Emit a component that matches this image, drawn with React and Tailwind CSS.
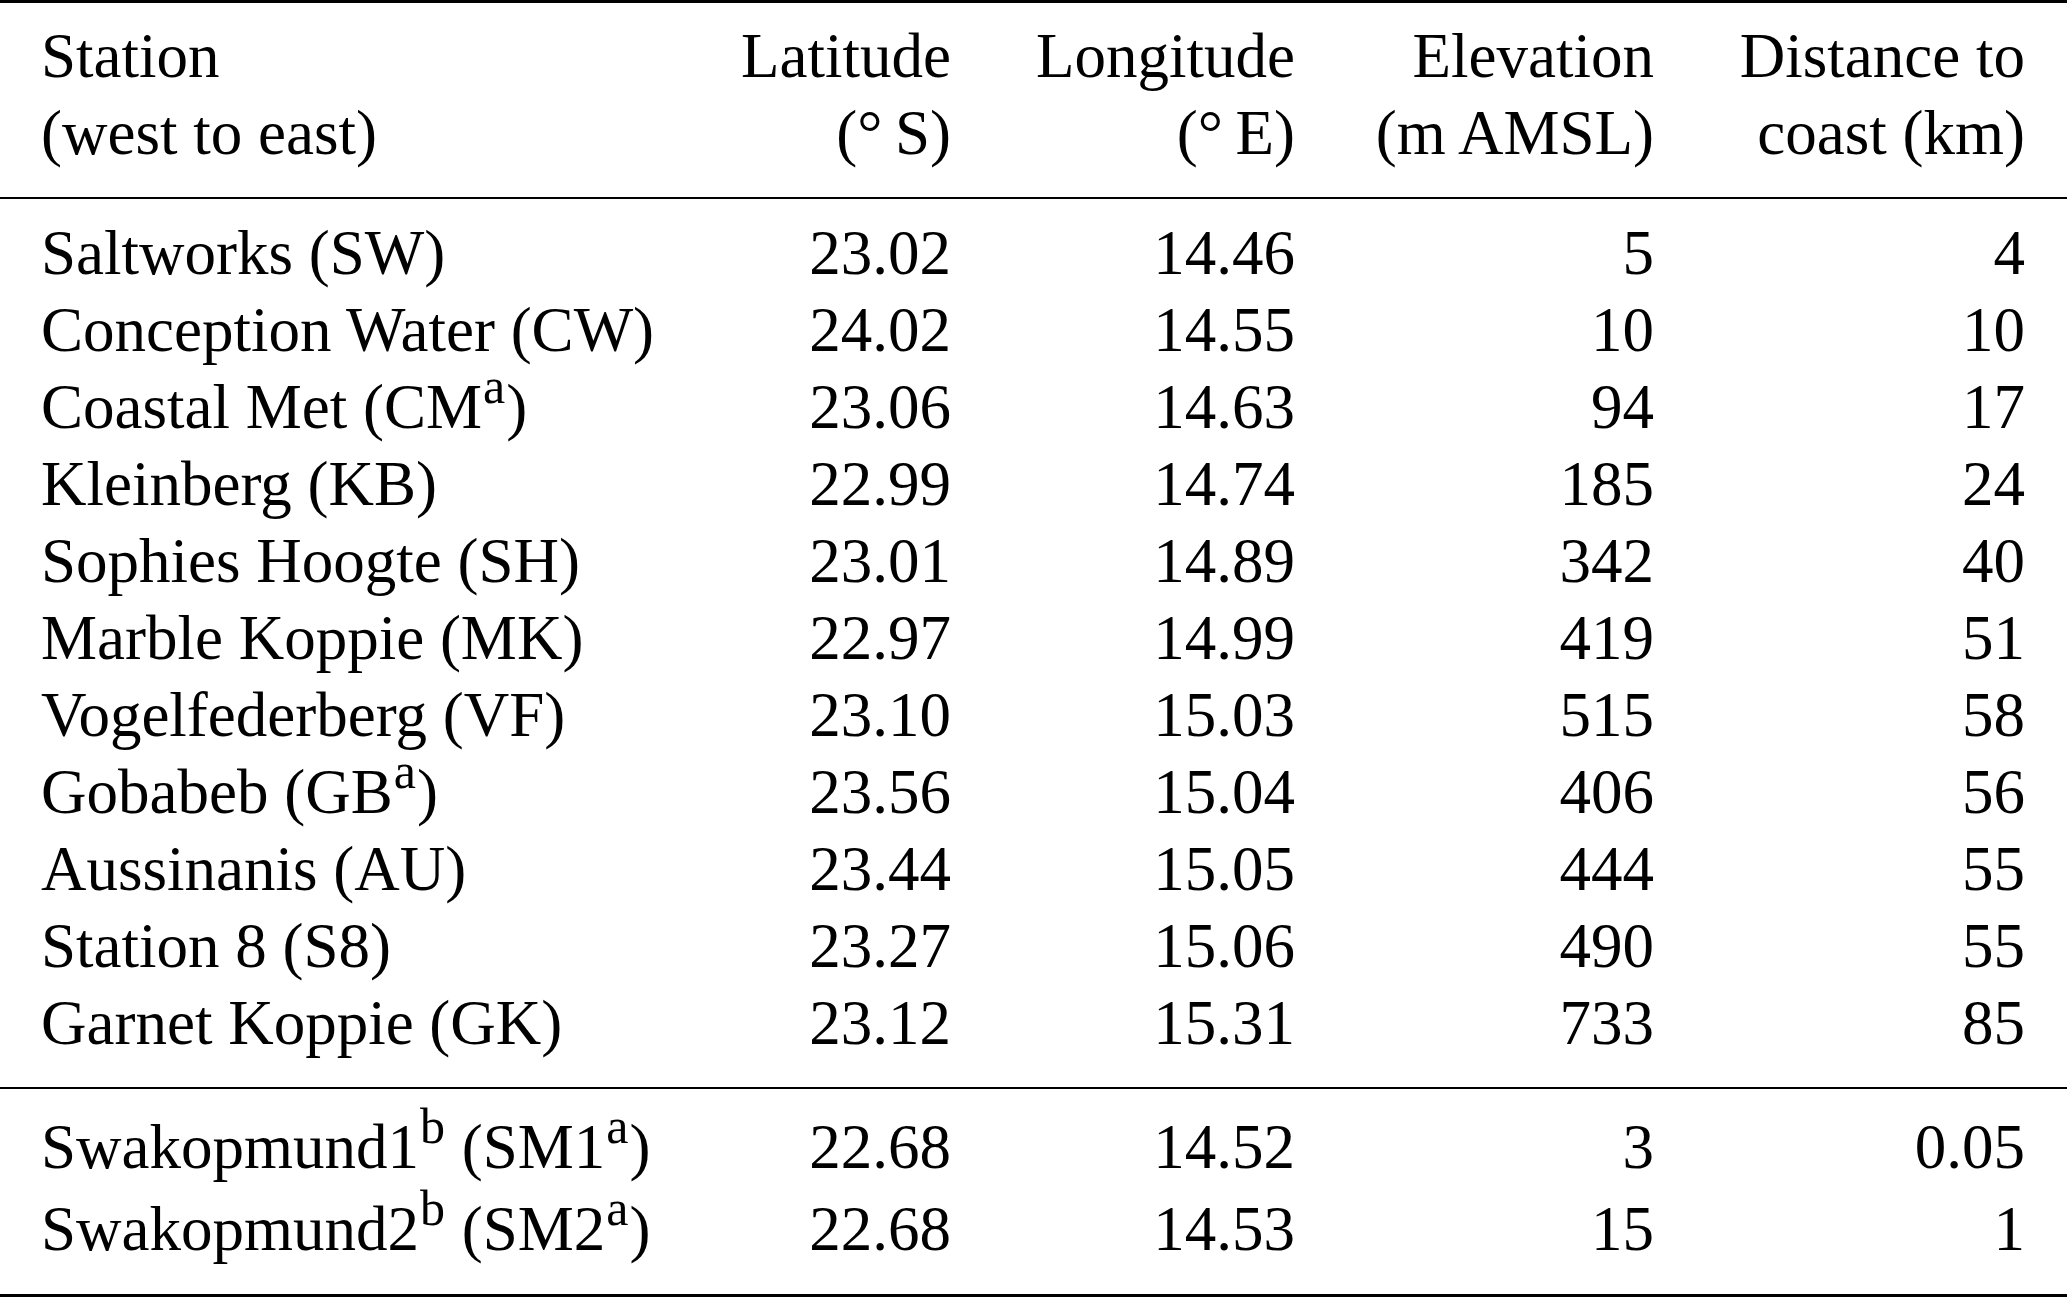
const stations = [
  { name: "Saltworks (SW)", lat: "23.02", lon: "14.46", elev: "5", dist: "4" },
  { name: "Conception Water (CW)", lat: "24.02", lon: "14.55", elev: "10", dist: "10" },
  { name: "Coastal Met (CM", sup: "a", lat: "23.06", lon: "14.63", elev: "94", dist: "17" },
  { name: "Kleinberg (KB)", lat: "22.99", lon: "14.74", elev: "185", dist: "24" },
  { name: "Sophies Hoogte (SH)", lat: "23.01", lon: "14.89", elev: "342", dist: "40" },
  { name: "Marble Koppie (MK)", lat: "22.97", lon: "14.99", elev: "419", dist: "51" },
  { name: "Vogelfederberg (VF)", lat: "23.10", lon: "15.03", elev: "515", dist: "58" },
  { name: "Gobabeb (GB", sup: "a", lat: "23.56", lon: "15.04", elev: "406", dist: "56" },
  { name: "Aussinanis (AU)", lat: "23.44", lon: "15.05", elev: "444", dist: "55" },
  { name: "Station 8 (S8)", lat: "23.27", lon: "15.06", elev: "490", dist: "55" },
  { name: "Garnet Koppie (GK)", lat: "23.12", lon: "15.31", elev: "733", dist: "85" },
];

const coastal = [
  { n: "1", lat: "22.68", lon: "14.52", elev: "3", dist: "0.05" },
  { n: "2", lat: "22.68", lon: "14.53", elev: "15", dist: "1" },
];

const cols = "grid grid-cols-[619px_291px_344px_359px_371px]";

function Sup({ children }) {
  return <sup className="text-[50px] -top-[25px] px-[1px]">{children}</sup>;
}

function Row({ name, lat, lon, elev, dist, tall }) {
  return (
    <div className={`${cols} whitespace-nowrap ${tall ? "leading-[82px]" : "leading-[77px]"}`}>
      <div>{name}</div>
      <div className="text-right">{lat}</div>
      <div className="text-right">{lon}</div>
      <div className="text-right">{elev}</div>
      <div className="text-right">{dist}</div>
    </div>
  );
}

export default function App() {
  return (
    <div className="w-[2067px] h-[1297px] bg-white text-black font-['Liberation_Serif','Times_New_Roman',serif] text-[63px]">
      <div className="h-[3px] bg-black" />

      {/* header */}
      <div className={`${cols} pl-[41px] pr-[42px] pt-[15px] pb-[25px] leading-[77px] whitespace-nowrap`}>
        <div>
          <div>Station</div>
          <div>(west to east)</div>
        </div>
        <div className="text-right">
          <div>Latitude</div>
          <div>(°&thinsp;S)</div>
        </div>
        <div className="text-right">
          <div>Longitude</div>
          <div>(°&thinsp;E)</div>
        </div>
        <div className="text-right">
          <div>Elevation</div>
          <div>(m AMSL)</div>
        </div>
        <div className="text-right">
          <div>Distance to</div>
          <div>coast (km)</div>
        </div>
      </div>

      <div className="h-[2px] bg-black" />

      {/* inland stations */}
      <div className="pl-[41px] pr-[42px] pt-[16px] pb-[25px]">
        {stations.map((s) => (
          <Row
            key={s.name}
            name={
              s.sup ? (
                <>
                  {s.name}
                  <Sup>{s.sup}</Sup>)
                </>
              ) : (
                s.name
              )
            }
            lat={s.lat}
            lon={s.lon}
            elev={s.elev}
            dist={s.dist}
          />
        ))}
      </div>

      <div className="h-[2px] bg-black" />

      {/* Swakopmund */}
      <div className="pl-[41px] pr-[42px] pt-[17px] pb-[24px]">
        {coastal.map((s) => (
          <Row
            key={s.n}
            tall
            name={
              <>
                Swakopmund{s.n}
                <Sup>b</Sup> (SM{s.n}
                <Sup>a</Sup>)
              </>
            }
            lat={s.lat}
            lon={s.lon}
            elev={s.elev}
            dist={s.dist}
          />
        ))}
      </div>

      <div className="h-[3px] bg-black" />
    </div>
  );
}
